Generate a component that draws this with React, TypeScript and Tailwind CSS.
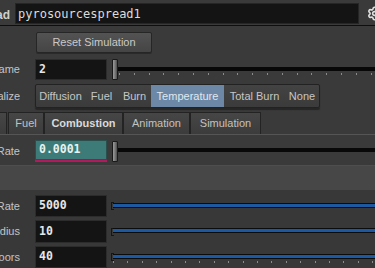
import { Settings } from "lucide-react";

const ui = { fontFamily: '"Liberation Sans", Arial, sans-serif' };
const mono = { fontFamily: '"DejaVu Sans Mono", "Liberation Mono", monospace' };

function Label({ text }: { text: string }) {
  return (
    <div
      className="w-[20px] shrink-0 overflow-hidden flex justify-end whitespace-nowrap text-[11px] text-[#c4c4c4]"
      style={ui}
    >
      {text}
    </div>
  );
}

function Ticks({ step, start }: { step: number; start: number }) {
  return (
    <div className="relative h-[3px] w-full">
      {Array.from({ length: 20 }).map((_, i) => (
        <span
          key={i}
          className="absolute top-0 w-px h-[2px] bg-[#8c8c8c]"
          style={{ left: start + i * step }}
        />
      ))}
    </div>
  );
}

function HandleSlider({ ticks }: { ticks?: boolean }) {
  return (
    <div className="flex-1 flex items-center h-full ml-[5px]">
      <div className="w-[6px] h-[21px] shrink-0 rounded-[1px] border border-[#1a1a1a] bg-gradient-to-r from-[#9a9a9a] via-[#7a7a7a] to-[#4e4e4e]" />
      <div className="flex-1 flex flex-col pt-[3px]">
        <div className="h-[4px] bg-[#080808]" />
        {ticks ? (
          <div className="mt-[2px]">
            <Ticks step={14.8} start={1} />
          </div>
        ) : (
          <div className="h-[5px]" />
        )}
      </div>
    </div>
  );
}

function BlueSlider({ ticks }: { ticks?: boolean }) {
  return (
    <div className="flex-1 flex items-center ml-[4px]">
      <div className="w-[3px] h-[8px] shrink-0 border-l border-t border-b border-[#161616] mr-[-1px] self-center" />
      <div className="flex-1 flex flex-col pt-[3px]">
        <div className="h-[5px] bg-[#0c0c0c] flex items-center">
          <div className="h-[3px] w-full bg-[#1d58a2]" />
        </div>
        {ticks ? (
          <div className="mt-[2px]">
            <Ticks step={14.4} start={0} />
          </div>
        ) : (
          <div className="h-[5px]" />
        )}
      </div>
    </div>
  );
}

function Field({ value, teal }: { value: string; teal?: boolean }) {
  return (
    <div className="ml-[15px] w-[72px] h-full shrink-0 flex flex-col">
      <div
        className={`flex-1 flex items-center pl-[3px] border ${
          teal
            ? "bg-[#3d7b78] border-[#2a4f4d] text-[#e8f2f1]"
            : "bg-[#141414] border-[#2c2c2c] text-[#e6e6e6]"
        } text-[11.5px] font-bold`}
        style={mono}
      >
        {value}
      </div>
      {teal && <div className="h-[2px] bg-[#b3195c]" />}
    </div>
  );
}

const vizItems = [
  { label: "Diffusion", w: "w-[49px]" },
  { label: "Fuel", w: "w-[33px]" },
  { label: "Burn", w: "w-[33px]" },
  { label: "Temperature", w: "w-[73px]" },
  { label: "Total Burn", w: "w-[61px]" },
  { label: "None", w: "w-[34px]" },
];

const tabs = [
  { label: "", w: "w-[7px]" },
  { label: "Fuel", w: "w-[36px]" },
  { label: "Combustion", w: "w-[79px]" },
  { label: "Animation", w: "w-[67px]" },
  { label: "Simulation", w: "w-[71px]" },
];

export default function App() {
  return (
    <div className="w-[375px] h-[268px] overflow-hidden bg-[#3a3a3a] select-none" style={ui}>
      {/* name row */}
      <div className="h-[26px] flex items-start pt-[3px] border-b border-[#0e0e0e]">
        <div className="w-[10px] shrink-0 overflow-hidden flex justify-end mt-[3px] text-[12px] font-bold text-[#d0d0d0]">
          ad
        </div>
        <div
          className="ml-[5px] w-[344px] h-[21px] shrink-0 bg-[#141414] border border-[#262626] flex items-center pl-[2px] text-[12px] text-[#dcdcdc]"
          style={mono}
        >
          pyrosourcespread1
        </div>
        <Settings size={15} strokeWidth={2.6} className="ml-[8px] mt-[3px] shrink-0 text-[#dedede]" />
      </div>

      {/* reset button */}
      <div className="pl-[36px] mt-[3px]">
        <button className="w-[116px] h-[21px] rounded-[2px] border border-[#262626] bg-gradient-to-b from-[#535353] to-[#454545] shadow-[0_1px_0_#2a2a2a] text-[11px] text-[#c9c9c9]">
          Reset Simulation
        </button>
      </div>

      {/* frame */}
      <div className="mt-[6px] h-[21px] flex items-center">
        <Label text="ame" />
        <Field value="2" />
        <HandleSlider ticks />
      </div>

      {/* visualize */}
      <div className="mt-[4px] h-[24px] flex items-center">
        <Label text="alize" />
        <div className="ml-[15px] h-full flex border border-[#222] rounded-[2px] shadow-[0_2px_1px_#262626] bg-gradient-to-b from-[#434343] to-[#3b3b3b]">
          {vizItems.map((v) => (
            <div
              key={v.label}
              className={`${v.w} h-full flex items-center justify-center text-[11px] ${
                v.label === "Temperature" ? "bg-[#6d87a6] text-[#dfe7ef]" : "text-[#c6c6c6]"
              }`}
            >
              {v.label}
            </div>
          ))}
        </div>
      </div>

      {/* tabs */}
      <div className="mt-[4px] h-[23px] flex items-end border-b border-[#555]">
        {tabs.map((t, i) => (
          <div
            key={i}
            className={`${t.w} h-[22px] flex items-center justify-center border border-b-0 border-[#232323] bg-gradient-to-b from-[#464646] to-[#3c3c3c] text-[11px] ${
              i === 0 ? "mr-[1px] border-l-0" : ""
            } ${t.label === "Combustion" ? "font-bold text-[#dadada]" : "text-[#c2c2c2]"}`}
          >
            {t.label}
          </div>
        ))}
      </div>

      {/* rate */}
      <div className="mt-[5px] h-[22px] flex items-center">
        <Label text="Rate" />
        <Field value="0.0001" teal />
        <HandleSlider />
      </div>

      {/* folder header */}
      <div className="mt-[3px] h-[25px] bg-[#474747] border-t border-[#4e4e4e]" />

      {/* source rows */}
      <div className="bg-[#383838] h-[81px] pt-[5px]">
        <div className="h-[22px] flex items-center">
          <Label text="Rate" />
          <Field value="5000" />
          <BlueSlider />
        </div>
        <div className="mt-[3px] h-[23px] flex items-center">
          <Label text="dius" />
          <Field value="10" />
          <BlueSlider />
        </div>
        <div className="mt-[3px] h-[22px] flex items-center">
          <Label text="oors" />
          <Field value="40" />
          <BlueSlider ticks />
        </div>
      </div>
    </div>
  );
}
